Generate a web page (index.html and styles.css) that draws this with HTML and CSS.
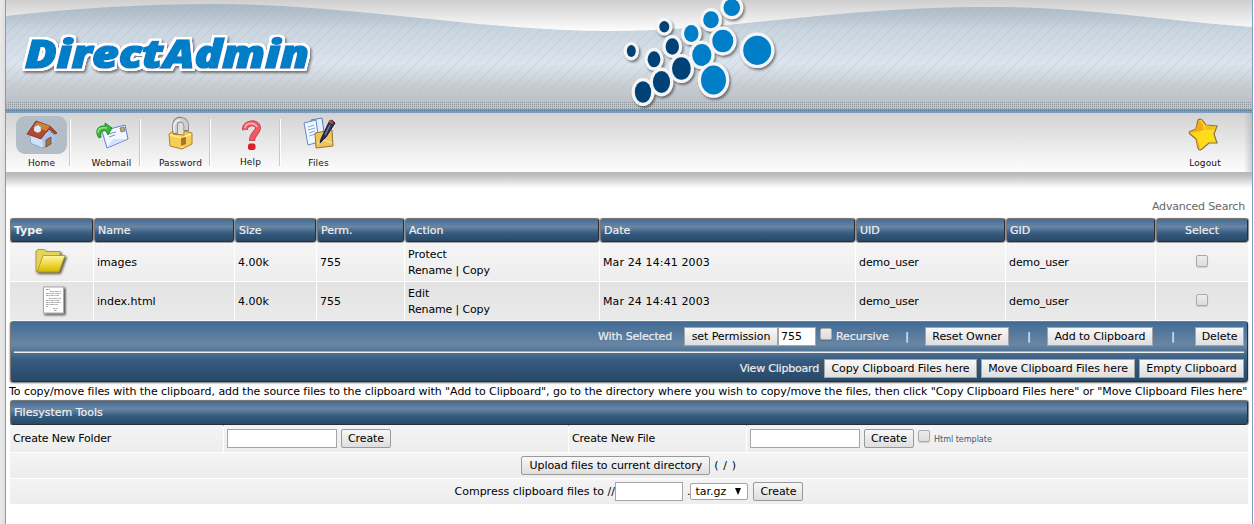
FILE: index.html
```
<!DOCTYPE html>
<html lang="en">
<head>
<meta charset="utf-8">
<title>DirectAdmin</title>
<link rel="stylesheet" href="styles.css">
</head>
<body>
<div class="page">
  <header class="banner">
    <svg width="1246" height="113" viewBox="6 0 1246 113">
      <defs>
        <linearGradient id="sky" x1="0" y1="0" x2="0" y2="1"><stop offset="0" stop-color="#a9b7c4"/><stop offset=".27" stop-color="#c9d5df"/><stop offset=".6" stop-color="#dce4ee"/><stop offset=".86" stop-color="#c6cbd0"/><stop offset="1" stop-color="#bcc1ca"/></linearGradient>
        <linearGradient id="top" x1="0" y1="0" x2="0" y2="1"><stop offset="0" stop-color="#cfcfcf"/><stop offset="1" stop-color="#ffffff"/></linearGradient>
        <pattern id="stripe" width="10" height="10" patternUnits="userSpaceOnUse"><path d="M-2 12L12-2M-7 7L7-7M3 17L17 3" stroke="#8fa3b4" stroke-opacity=".22" stroke-width="1"/></pattern>
        <pattern id="dots" width="2" height="2" patternUnits="userSpaceOnUse"><rect width="1" height="1" fill="#8e969c"/></pattern>
        <pattern id="bluedots" width="2" height="2" patternUnits="userSpaceOnUse"><rect width="1" height="1" fill="#517799"/></pattern>
        <filter id="shade" x="-20%" y="-20%" width="140%" height="150%"><feDropShadow dx="1.5" dy="2" stdDeviation="1.2" flood-color="#222" flood-opacity=".55"/></filter>
        <filter id="outline" x="-5%" y="-20%" width="110%" height="150%">
          <feMorphology in="SourceAlpha" operator="dilate" radius="2" result="fat"/>
          <feGaussianBlur in="fat" stdDeviation=".5" result="soft"/>
          <feComponentTransfer in="soft" result="edge"><feFuncA type="linear" slope="2"/></feComponentTransfer>
          <feFlood flood-color="#fff"/><feComposite in2="edge" operator="in" result="white"/>
          <feDropShadow in="white" dx="1.5" dy="2" stdDeviation="1.2" flood-color="#222" flood-opacity=".55" result="rim"/>
          <feMerge><feMergeNode in="rim"/><feMergeNode in="SourceGraphic"/></feMerge>
        </filter>
      </defs>
      <rect x="6" width="1246" height="32" fill="url(#top)"/>
      <path d="M6 16C75 8 145 4 215 4C350 4 480 31 610 31C735 31 830 7 990 7C1090 7 1160 21 1252 27V102H6Z" fill="url(#sky)"/>
      <path d="M6 16C75 8 145 4 215 4C350 4 480 31 610 31C735 31 830 7 990 7C1090 7 1160 21 1252 27V91H6Z" fill="url(#stripe)"/>
      <rect x="6" y="102" width="1246" height="7" fill="#bfc5ca"/>
      <rect x="6" y="102" width="1246" height="7" fill="url(#dots)"/>
      <rect x="6" y="109" width="1246" height="4" fill="#7d9dbd"/>
      <rect x="6" y="110" width="1246" height="1" fill="url(#bluedots)"/>
      <text class="logo" x="25" y="68" textLength="284" lengthAdjust="spacingAndGlyphs" filter="url(#outline)">DirectAdmin</text>
      <g filter="url(#shade)" stroke="#f5f5f5" stroke-width="6.4" paint-order="stroke">
        <g fill="#004275">
          <ellipse cx="664.3" cy="26.7" rx="5" ry="5.7"/><ellipse cx="631.3" cy="51" rx="4.5" ry="6"/>
          <ellipse cx="654" cy="59.3" rx="6.4" ry="8"/><ellipse cx="672.3" cy="46.5" rx="6.7" ry="8.2"/>
          <ellipse cx="643" cy="92" rx="8.2" ry="10.8"/><ellipse cx="661.5" cy="82" rx="8.6" ry="11"/><ellipse cx="681.4" cy="68.5" rx="9.4" ry="11.3"/>
        </g>
        <g fill="#007ec8">
          <ellipse cx="691.3" cy="33.5" rx="7.2" ry="8.4"/><ellipse cx="701.8" cy="55" rx="9.6" ry="11"/>
          <ellipse cx="711" cy="19.8" rx="7.8" ry="8.5"/><ellipse cx="731.8" cy="7.5" rx="8.3" ry="8.6"/>
          <ellipse cx="722.8" cy="41" rx="10.5" ry="11.2"/><ellipse cx="713.5" cy="80" rx="12.5" ry="14.6"/><ellipse cx="757.2" cy="50.3" rx="14" ry="14.6"/>
        </g>
      </g>
    </svg>
  </header>

  <nav class="nav">
    <a class="item home"><span class="pic"><svg width="34" height="32" viewBox="0 0 34 32"><path d="M5 15L15 11L28 14L29 22L18 29L6 24Z" fill="#dce8fb" stroke="#5570a0" stroke-width=".8"/><path d="M5 15L16 19L18 29L6 24Z" fill="#cfe0f8"/><path d="M18 28L17 20L24 12L30 17V23Z" fill="#a9c5ef"/><path d="M11 2L25 7L32 14L30 15L24 10L16 20L2 15Z" fill="#b4472f" stroke="#743020" stroke-width=".8"/><path d="M12 3L25 7L21 12L9 7Z" fill="#cf8038"/><path d="M9 8L13 6L16 8V12L13 14L9 12Z" fill="#e6ebf1" stroke="#8999a9" stroke-width=".5"/><path d="M21 21L26 18V25L21 28Z" fill="#a6733d" stroke="#5e4121" stroke-width=".7"/></svg></span><span>Home</span></a>
    <a class="item mail"><span class="pic"><svg width="34" height="32" viewBox="0 0 34 32"><path d="M7 12L30 6L33 20L12 29Z" fill="#f1f6ff" stroke="#5c82ce" stroke-width="1"/><path d="M12 28L18 20L32 20L12 28.500Z" fill="#d4e3fb"/><path d="M13 15L21 13M14 18L20 16" stroke="#8296b8"/><path d="M25 9L29 8L30 12L26 13Z" fill="#e0a343" stroke="#4465af" stroke-width=".7"/><path d="M4 19C-1 12 3 6 10 7V4L17 9L13 16L11 12C7 11 5 13 6 18Z" fill="#35b834" stroke="#147924" stroke-width=".8"/><path d="M3 14C3 9 7 8 12 9" stroke="#9ce576" fill="none" stroke-width="1.5"/></svg></span><span>Webmail</span></a>
    <a class="item pass"><span class="pic"><svg width="34" height="34" viewBox="0 0 34 34"><path d="M11 18V10C11 4 15 3 18 4C22 5 23 8 22 15" fill="none" stroke="#777" stroke-width="5.500"/><path d="M11 17V10C11 4 15 3 18 4C22 5 23 8 22 14" fill="none" stroke="#cfcfcf" stroke-width="4"/><path d="M10 17V10C11 5 14 4 16 4" fill="none" stroke="#f2f2f2" stroke-width="1.500"/><path d="M5 18L9 15V18L20 19V15L28 17V28L18 33L6 30Z" fill="#f7ce54" stroke="#b48122" stroke-width="1"/><path d="M6 19L18 22L27 18M18 22V32" fill="none" stroke="#ffec9a" stroke-width="1.600"/><path d="M17 22L22 21V28L17 30Z" fill="#ab742a"/></svg></span><span>Password</span></a>
    <a class="item help"><span class="pic"><svg width="28" height="32" viewBox="0 0 28 32"><path d="M8 11C7 3 21 2 21 9C21 14 15 14 15 22" fill="none" stroke="#b93b48" stroke-width="6"/><path d="M8 11C7 3 21 2 21 9C21 14 15 14 15 21.500" fill="none" stroke="#f15a65" stroke-width="4.500"/><path d="M8 9C9 3 18 3 20 8" fill="none" stroke="#ffb1b5" stroke-width="1.600"/><rect x="11.500" y="25" width="6.500" height="5.500" rx="1.500" fill="#e41e2a" stroke="#c72029"/></svg></span><span>Help</span></a>
    <a class="item files"><span class="pic"><svg width="36" height="34" viewBox="0 0 36 34"><path d="M10 4L21 2L24 23L12 27Z" fill="#e5efff" stroke="#5679ba"/><path d="M3 7L15 4L18 26L7 29Z" fill="#f1f7ff" stroke="#6587c7"/><path d="M7 11L13 9M7 14L14 12M8 17L14 15M8 20L15 18" stroke="#8aa7dc"/><path d="M14 17L31 14L32 30L15 32Z" fill="#edc35b" stroke="#9b7430"/><path d="M16 27L23 24L31 27" fill="none" stroke="#fff0aa"/><path d="M20 23L28 6Q30 2 34 7L25 21L19 27Z" fill="#293453" stroke="#151b36"/><path d="M28 5L32 7" stroke="#c44535" stroke-width="3"/><path d="M24 19L29 9" stroke="#7482ac" stroke-width="1.200"/></svg></span><span>Files</span></a>
    <a class="item logout"><span class="pic"><svg width="34" height="34" viewBox="0 0 34 34"><path d="M12 3Q15 1 17 4L20 8L31 9L28 17L31 26H23L16 32Q13 34 12 31L10 22L4 17Q2 15 5 14L10 12Z" fill="#ffdc19" stroke="#8b7046" stroke-width="1.200"/><path d="M13 3Q17 5 18 13L11 15L4 16L10 12ZM5 16L11 21L14 31L12 30L10 21Z" fill="#f7aa18"/><path d="M19 8L30 10L27 13L19 13Z" fill="#f4bd20"/></svg></span><span>Logout</span></a>
  </nav>
  <div class="navshadow"></div>

  <main>
    <div class="search"><span>Advanced Search</span></div>
    <div class="grid">
      <div class="h b">Type</div><div class="h">Name</div><div class="h">Size</div><div class="h">Perm.</div><div class="h">Action</div><div class="h">Date</div><div class="h">UID</div><div class="h">GID</div><div class="h mid">Select</div>
      <div class="c mid"><svg width="36" height="32" viewBox="0 0 36 32"><defs><linearGradient id="gold" x1="0" y1="0" x2="0" y2="1"><stop offset="0" stop-color="#fff7a3"/><stop offset=".5" stop-color="#efd944"/><stop offset="1" stop-color="#d4b900"/></linearGradient><filter id="drop" x="-20%" y="-20%" width="150%" height="150%"><feDropShadow dx="1.500" dy="1.500" stdDeviation=".8" flood-color="#111" flood-opacity=".75"/></filter></defs><g filter="url(#drop)"><path d="M2 26V5L4 3.500H10L12 5.500H26V11" fill="#e5d45b" stroke="#9c8b26" stroke-width=".8"/><path d="M3 26L9 9.500H31L25 26Z" fill="url(#gold)" stroke="#a38f22" stroke-width=".8"/></g></svg></div><div class="c">images</div><div class="c">4.00k</div><div class="c">755</div><div class="c two">Protect<br><span>Rename | Copy</span></div><div class="c date">Mar 24 14:41 2003</div><div class="c user">demo_user</div><div class="c user">demo_user</div><div class="c mid"><i class="check"></i></div>
      <div class="c alt mid"><svg class="doc" width="26" height="32" viewBox="0 0 26 32"><rect x="2.500" y="2" width="20" height="26" fill="#fdfdfd" stroke="#aaa" filter="url(#drop)"/><g fill="none" stroke="#8f8f8f" stroke-width=".8"><path d="M5 4.500H9M9 6.500H20M5 8.500H20M5 10.500H18M8 13.500H20M5 15.500H19M5 17.500H20M5 19.500H17M5 21.500H7M12 23.500H17M13 25.500H16" stroke-dasharray="2.500 .7 1.300 .7"/></g></svg></div><div class="c alt">index.html</div><div class="c alt">4.00k</div><div class="c alt">755</div><div class="c alt two">Edit<br><span>Rename | Copy</span></div><div class="c alt date">Mar 24 14:41 2003</div><div class="c alt user">demo_user</div><div class="c alt user">demo_user</div><div class="c alt mid"><i class="check"></i></div>
    </div>

    <section class="actions">
      <div class="row first"><span class="with">With Selected</span><button class="perm">set Permission</button><input class="permval" value="755"><i class="check"></i><span class="rec">Recursive</span><b class="s1">|</b><button class="reset">Reset Owner</button><b class="s2">|</b><button class="add">Add to Clipboard</button><b class="s3">|</b><button class="del">Delete</button></div>
      <div class="rule"></div>
      <div class="row second"><span class="view">View Clipboard</span><button class="copy">Copy Clipboard Files here</button><button class="move">Move Clipboard Files here</button><button class="empty">Empty Clipboard</button></div>
    </section>
    <p class="note"><span>To copy/move files with the clipboard, add the source files to the clipboard with "Add to Clipboard", go to the directory where you wish to copy/move the files, then click "Copy Clipboard Files here" or "Move Clipboard Files here"</span></p>
    <div class="h tools">Filesystem Tools</div>
    <div class="create">
      <div class="t label">Create New Folder</div><div class="t"><input class="name"><button class="soft">Create</button></div>
      <div class="t label">Create New File</div><div class="t"><input class="name"><button class="soft">Create</button><i class="check"></i><small>Html template</small></div>
    </div>
    <div class="t wide"><button class="soft upload">Upload files to current directory</button><span class="root">( / )</span></div>
    <div class="t wide"><span>Compress clipboard files to //</span><input class="archive"><span>.</span><span class="select"><span>tar.gz</span><svg width="8" height="8" viewBox="0 0 8 8"><path d="M1 0H7L4 7Z"/></svg></span><button class="soft">Create</button></div>
  </main>
</div>
</body>
</html>
```
FILE: styles.css
```
* { box-sizing: border-box; }
body { margin: 0; height: 524px; overflow: hidden; background: linear-gradient(90deg, #e9e9e9, #dfdfdf 5px, #fff 5px); font: 11px/16px "DejaVu Sans", Verdana, sans-serif; color: #000; }
.page { width: 1248px; height: 524px; margin-left: 5px; border: solid #7d9dbd; border-width: 0 1px; background: #fff; }
.banner { height: 113px; }
.banner svg { display: block; }
.logo { font: italic 800 38px "Open Sans", sans-serif; fill: #007ec8; stroke: #007ec8; stroke-width: 1.6px; }
.nav { height: 59px; display: flex; background: linear-gradient(90deg, transparent 1238px, #aaa8 1246px), linear-gradient(#d3d3d3, #fdfdfd); font-size: 9px; line-height: 12px; color: #111; }
.item { height: 59px; padding-top: 3px; display: flex; flex-direction: column; align-items: center; letter-spacing: .15px; background: linear-gradient(90deg, #c9c9c9 1px, #fff 1px) right 7px top 6px / 2px 47px no-repeat; }
.pic { height: 38px; width: 51px; margin-bottom: 3px; display: flex; align-items: center; justify-content: center; }
.home { width: 72px; padding-right: 1px; }
.home .pic { border-radius: 9px; background: #b3bdc8; }
.mail, .pass, .help { width: 70px; padding-right: 3px; }
.pass, .help { padding-right: 5px; }
.files { width: 64px; padding-right: 3px; background: none; }
.pass .pic, .files .pic { padding-bottom: 5px; }
.help .pic { margin-bottom: 2px; }
.logout { width: 64px; margin-left: auto; margin-right: 15px; background: none; }
.logout .pic { padding-bottom: 2px; padding-right: 4px; }
.navshadow { height: 18px; background: linear-gradient(#b7b7b7, #bdbdbd 3px, #fff 16px); }
main { padding: 0 4px; }
.search { height: 28px; padding: 9px 3px 0 0; text-align: right; color: #666; letter-spacing: -.17px; }
.grid { display: grid; grid-template-columns: 83px 140px 81px 87px 194px 255px 149px 149px 92px; grid-template-rows: 24px 38px 38px; gap: 1px; width: 1238px; }
.h { height: 24px; padding: 0 3px; color: #f0f0f0; line-height: 23px; border: 1px solid #7d7873; border-right-color: #25303a; border-bottom-color: #25303a; border-radius: 3px; background: linear-gradient(#426c96, #6986a4 35%, #355b80 65%, #294966); box-shadow: 0 1px 1px #999, 1px 0 1px #888; -webkit-text-stroke: .2px #f0f0f0; }
.h.b { font-weight: bold; letter-spacing: -.1px; -webkit-text-stroke: 0; }
.h.mid { text-align: center; }
.c { display: flex; align-items: center; padding: 1px 3px 0; background: linear-gradient(#f5f5f5, #ededed); }
.c.alt { background: linear-gradient(#e3e3e3, #eaeaea); }
.c.mid { justify-content: center; padding-top: 0; }
.c .check { margin-bottom: 2px; }
.two { display: block; line-height: 16px; padding-top: 4px; }
.two span { letter-spacing: -.15px; }
.date { letter-spacing: .12px; }
.user { letter-spacing: -.1px; }
.doc { margin-left: 4px; }
.check { display: block; flex: none; width: 12px; height: 12px; border: 1px solid #aaa; border-radius: 2px; background: linear-gradient(#ededed, #dcdcdc); box-shadow: 0 1px 1px #0002; }
.actions { width: 1238px; height: 61px; margin-top: 1px; padding: 0 3px; color: #eee; border: 1px solid #7d7873; border-right-color: #25303a; border-bottom-color: #25303a; border-radius: 3px; background: linear-gradient(#426c96, #6986a4 38%, #355b80 65%, #294966); box-shadow: 0 1px 2px #666; }
.row { display: flex; align-items: center; justify-content: flex-end; }
.row > span { -webkit-text-stroke: .2px #eee; }
.first { height: 29px; }
.second { height: 31px; }
.rule { height: 2px; background: #eee; border-top: 1px solid #aaa; }
button, input { font: 11px "DejaVu Sans", sans-serif; color: #000; height: 19px; padding: 0; margin: 0; border: 1px solid #a5a5a5; border-radius: 0; background: #fff; }
button { background: linear-gradient(#f8f8f8, #dedede); white-space: nowrap; letter-spacing: -.07px; }
.with { margin-right: 12px; letter-spacing: -.17px; }
.perm { width: 94px; }
.permval { width: 38px; padding-left: 2px; margin-right: 4px; }
.first .check { margin-bottom: 5px; }
.rec { margin-left: 4px; width: 53px; letter-spacing: -.1px; }
.row b { width: 3px; text-align: center; }
.s1 { margin: 0 17px 0 16px; }
.reset { width: 84px; }
.s2 { margin: 0 17px 0 18px; }
.add { width: 106px; }
.s3 { margin: 0 21px 0 18px; }
.del { width: 49px; }
.view { margin-right: 5px; letter-spacing: -.2px; }
.copy { width: 153px; margin-right: 4px; }
.move { width: 154px; margin-right: 4px; }
.empty { width: 105px; }
.note { height: 18px; margin: 0 0 0 -1px; line-height: 20px; white-space: nowrap; letter-spacing: -.055px; }
.tools { width: 1238px; height: 25px; line-height: 23px; }
.create { display: grid; grid-template-columns: 213px 344px 177px 501px; column-gap: 1px; width: 1238px; }
.t { display: flex; align-items: center; height: 27px; padding: 0 3px; background: linear-gradient(#f4f4f4, #ededed); }
.t.label { letter-spacing: -.2px; }
.wide { justify-content: center; height: 25px; margin-top: 1px; width: 1238px; }
.name { width: 110px; margin-right: 4px; }
.soft { width: 50px; border-color: #999; border-radius: 2px; }
.create .check { margin: 0 4px 5px; }
small { font-size: 8px; color: #3a5b7a; padding-top: 2px; }
.upload { width: 189px; margin-right: 4px; }
.root { letter-spacing: .6px; }
.archive { width: 68px; margin-right: 4px; }
.select { display: flex; align-items: center; justify-content: space-between; width: 58px; height: 17px; padding: 0 5px 0 4px; margin-right: 5px; border: 1px solid #a5a5a5; background: #fff; border-radius: 2px; }
```
